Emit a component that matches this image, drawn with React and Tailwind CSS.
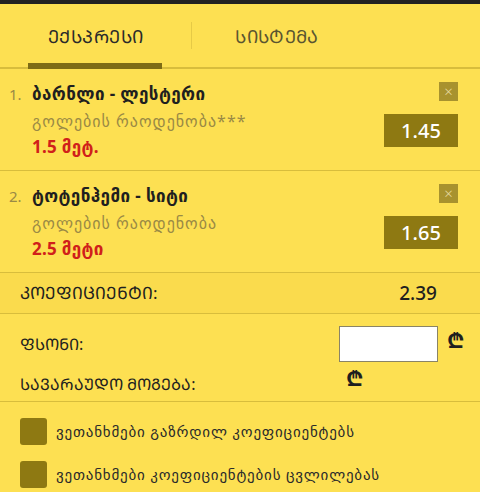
import React from "react";

const mt = (s) =>
  Array.from(s)
    .map((ch) => {
      const c = ch.charCodeAt(0);
      return c >= 0x10d0 && c <= 0x10fa ? String.fromCharCode(c + 0xbc0) : ch;
    })
    .join("");

const font = { fontFamily: '"Noto Sans", "DejaVu Sans", sans-serif' };

function Bet({ n, title, market, line, odds }) {
  return (
    <div className="flex h-[102px] border-b border-[#d8bd3c] pl-[9px] pr-[22px] pt-[13px]">
      <div className="w-[23px] text-[15px] leading-[24px] text-[#9a8a45]">{n}.</div>
      <div className="flex-1">
        <div className="text-[17px] font-bold leading-[24px] tracking-[0.4px] text-[#1f1f1f]">{title}</div>
        <div className="mt-[3px] text-[16px] leading-[24px] tracking-[1px] text-[#9a8a45]">{market}</div>
        <div className="mt-[2px] text-[17px] font-bold leading-[24px] tracking-[0.3px] text-[#d0201a]">{line}</div>
      </div>
      <div className="flex w-[74px] flex-col items-end">
        <div className="flex h-[19px] w-[19px] items-center justify-center bg-[#a8922e] text-[15px] font-light leading-none text-[#e8dca0]">
          ×
        </div>
        <div className="mt-[13px] flex h-[33px] w-[74px] items-center justify-center bg-[#8e7912] text-[20px] font-medium text-white">
          {odds}
        </div>
      </div>
    </div>
  );
}

function Check({ label }) {
  return (
    <div className="flex h-[43px] items-center pl-[20px]">
      <div className="h-[27px] w-[27px] rounded-[3px] bg-[#8e7912]" />
      <div className="ml-[9px] text-[15px] tracking-[0.8px] text-[#2a2a2a]">{label}</div>
    </div>
  );
}

export default function App() {
  return (
    <div className="h-[492px] w-[480px] overflow-hidden bg-[#fde052]" style={font}>
      <div className="h-[4px] bg-[#222222]" />
      <div className="relative flex h-[65px] border-b-2 border-[#d8bd3c]">
        <div className="relative flex w-[191px] items-center justify-center pt-[2px]">
          <span className="text-[18px] font-medium tracking-[0.5px] text-[#2a2a2a]">{mt("ექსპრესი")}</span>
          <div className="absolute bottom-[-2px] left-[28px] h-[6px] w-[134px] bg-[#7e6c16]" />
        </div>
        <div className="my-[18px] w-px bg-[#e6ca46]" />
        <div className="flex flex-1 items-center justify-center pr-[118px] pt-[2px]">
          <span className="text-[18px] tracking-[0.3px] text-[#5a5530]">{mt("სისტემა")}</span>
        </div>
      </div>
      <Bet n={1} title="ბარნლი - ლესტერი" market="გოლების რაოდენობა***" line="1.5 მეტ." odds="1.45" />
      <Bet n={2} title="ტოტენჰემი - სიტი" market="გოლების რაოდენობა" line="2.5 მეტი" odds="1.65" />
      <div className="flex h-[41px] items-center border-b border-[#d8bd3c] bg-[#fadb4d] pl-[20px] pr-[43px]">
        <span className="flex-1 text-[17px] text-[#1f1f1f]">{mt("კოეფიციენტი")}:</span>
        <span className="text-[19px] font-medium text-[#1f1f1f]">2.39</span>
      </div>
      <div className="border-b border-[#d8bd3c] pb-[3px]">
        <div className="mt-[12px] flex h-[36px] items-center pl-[20px]">
          <span className="w-[319px] text-[16px] text-[#1f1f1f]">{mt("ფსონი")}:</span>
          <div className="h-[36px] w-[99px] border border-[#8a8466] bg-white" />
          <span className="ml-[9px] self-start text-[22px] font-bold leading-[26px] text-[#1f1f1f]">₾</span>
        </div>
        <div className="mt-[8px] flex h-[28px] items-center pl-[20px]">
          <span className="w-[326px] text-[16px] text-[#1f1f1f]">{mt("სავარაუდო მოგება")}:</span>
          <span className="mt-[-14px] text-[22px] font-bold leading-[26px] text-[#1f1f1f]">₾</span>
        </div>
      </div>
      <div className="pt-[8px]">
        <Check label="ვეთანხმები გაზრდილ კოეფიციენტებს" />
        <Check label="ვეთანხმები კოეფიციენტების ცვლილებას" />
      </div>
    </div>
  );
}
